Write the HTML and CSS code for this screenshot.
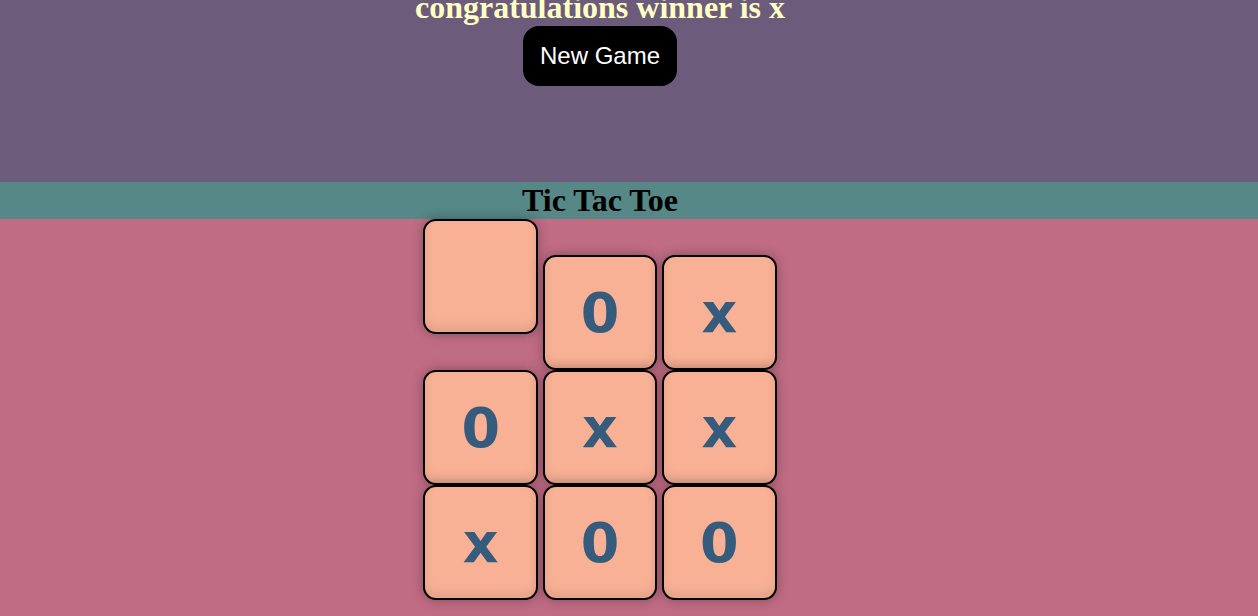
FILE: index.html
```html
<!DOCTYPE html>
<html>
<head>
<meta charset="utf-8">
<title>Tic Tac Toe</title>
<link rel="stylesheet" href="styles.css">
</head>
<body>
<div class="top">
  <div class="wrap">
    <h1 class="msg">congratulations winner is x</h1>
    <button class="new">New Game</button>
  </div>
</div>
<h1 class="title">Tic Tac Toe</h1>
<div class="wrap">
  <div class="board">
    <button class="box"></button>
    <button class="box">0</button>
    <button class="box">x</button>
    <button class="box">0</button>
    <button class="box">x</button>
    <button class="box">x</button>
    <button class="box">x</button>
    <button class="box">0</button>
    <button class="box">0</button>
  </div>
</div>
</body>
</html>
```
FILE: styles.css
```css
html, body {
  margin: 0;
  padding: 0;
}
body {
  background: #c06c84;
  font-family: "Liberation Serif", "Times New Roman", serif;
  overflow: hidden;
  height: 616px;
}
.top {
  background: #6c5b7b;
  height: 182px;
  overflow: hidden;
}
.wrap {
  width: 1200px;
  text-align: center;
}
.msg {
  margin: -11px 0 0 0;
  font-size: 32px;
  font-weight: bold;
  color: #ffffc4;
}
.new {
  margin-top: 0;
  background: #000;
  color: #fff;
  border: none;
  border-radius: 16px;
  padding: 16px 17px;
  font-family: "Liberation Sans", Arial, sans-serif;
  font-size: 24px;
}
.title {
  margin: 0;
  background: #558886;
  font-size: 32px;
  font-weight: bold;
  color: #000;
  text-align: center;
  padding-right: 58px;
}
.board {
  width: 370px;
  margin: 0 auto;
  font-family: "Liberation Sans", Arial, sans-serif;
  font-size: 16px;
  text-align: center;
}
.box {
  box-sizing: content-box;
  width: 18vh;
  height: 18vh;
  margin: 0;
  padding: 0;
  vertical-align: baseline;
  background: #f8b195;
  border: 2px solid #000;
  border-radius: 13px;
  box-shadow: 0 0 12px rgba(0,0,0,0.3), inset 0 -6px 10px rgba(0,0,0,0.08);
  font-family: "DejaVu Sans", sans-serif;
  font-weight: bold;
  font-size: 9vh;
  color: #355c7d;
}
```
